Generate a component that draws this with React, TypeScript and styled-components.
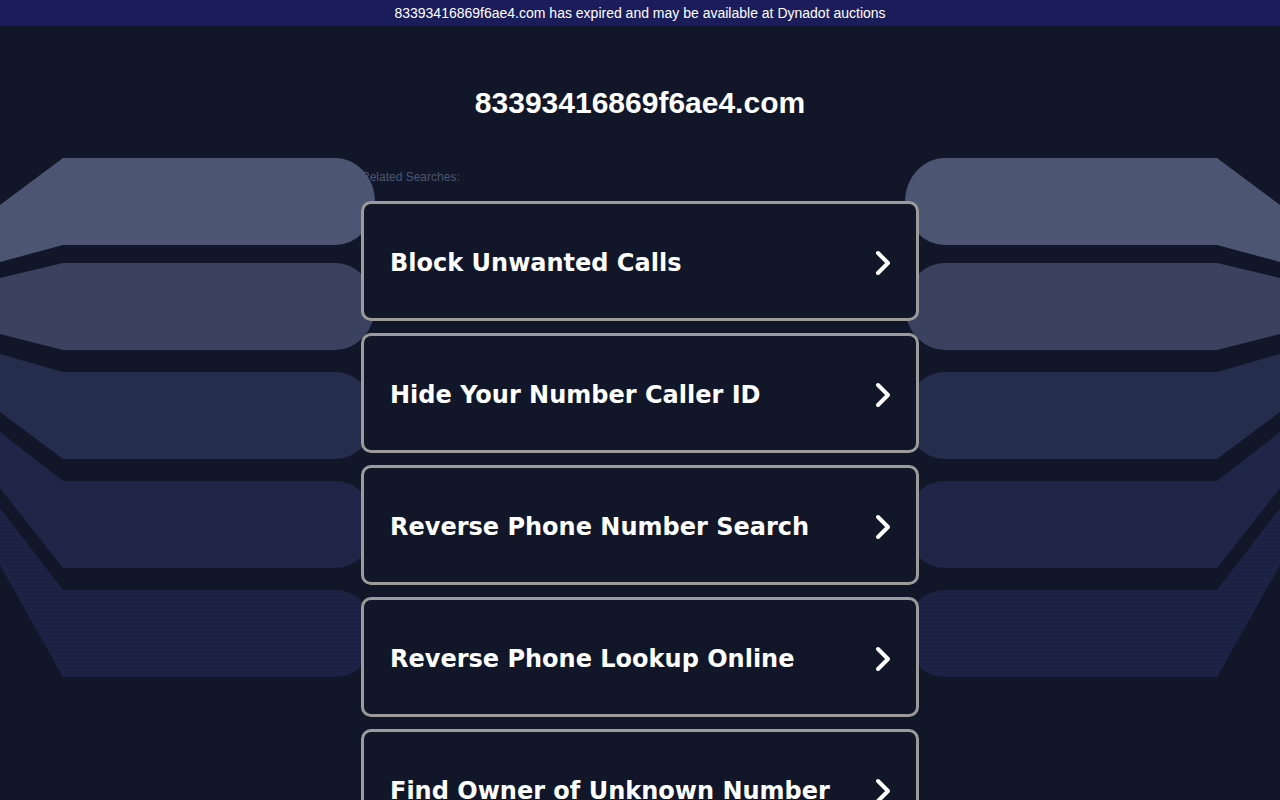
import styled, { createGlobalStyle } from "styled-components";

const GlobalStyle = createGlobalStyle`
  html, body {
    margin: 0;
    padding: 0;
    background: #111729;
    scrollbar-width: none;
  }
  body::-webkit-scrollbar {
    display: none;
  }
`;

const Page = styled.div`
  position: relative;
  min-height: 100vh;
  overflow: hidden;
  background: #111729;
  font-family: "Liberation Sans", Arial, sans-serif;
`;

const TopBar = styled.div`
  position: relative;
  z-index: 2;
  height: 26px;
  background: #1b1d5b;
  color: #ffffff;
  font-size: 14px;
  line-height: 26px;
  text-align: center;
`;

const Backdrop = styled.svg`
  position: absolute;
  top: 0;
  left: 0;
  width: 1280px;
  height: 720px;
  z-index: 0;
  pointer-events: none;
`;

const Content = styled.main`
  position: relative;
  z-index: 1;
  width: 558px;
  margin: 0 auto;
  padding-bottom: 40px;
`;

const Title = styled.h1`
  margin: 59px 0 0;
  font-size: 30px;
  line-height: 36px;
  font-weight: 700;
  color: #ffffff;
  text-align: center;
  font-family: "Liberation Sans", Arial, sans-serif;
`;

const Label = styled.div`
  margin-top: 49px;
  font-size: 12px;
  line-height: 14px;
  color: #4c5672;
`;

const List = styled.div`
  margin-top: 17px;
  display: flex;
  flex-direction: column;
  gap: 12px;
`;

const Card = styled.a`
  box-sizing: border-box;
  height: 120px;
  display: flex;
  align-items: center;
  justify-content: space-between;
  padding: 3px 25px 0 26px;
  border: 3px solid #9b9b9b;
  border-radius: 10px;
  background: #111729;
  color: #ffffff;
  text-decoration: none;
  cursor: pointer;
`;

const CardText = styled.span`
  font-family: "DejaVu Sans", Verdana, sans-serif;
  font-weight: 700;
  font-size: 24px;
  line-height: 30px;
  white-space: nowrap;
`;

const Chevron = () => (
  <svg width="16" height="26" viewBox="0 0 16 26" fill="none">
    <polyline
      points="3,3 13,13 3,23"
      stroke="#ffffff"
      strokeWidth="4"
      strokeLinecap="round"
      strokeLinejoin="round"
    />
  </svg>
);

// band geometry: corner top/bottom at x=63, edge top/bottom at x=0
const bands = [
  { T: 158, B: 245, t0: 205, b0: 262, fill: "#4c5672" },
  { T: 263, B: 350, t0: 278, b0: 334, fill: "#3a4260" },
  { T: 372, B: 459, t0: 354, b0: 412, fill: "#252d4c" },
  { T: 481, B: 568, t0: 432, b0: 488, fill: "url(#dots4)" },
  { T: 590, B: 677, t0: 508, b0: 565, fill: "url(#dots5)" },
];

const bandPath = (b: (typeof bands)[number]) => {
  const ry = (b.B - b.T) / 2;
  return `M -20 ${b.t0 - (b.T - b.t0) * (20 / 63)} L 63 ${b.T} L 335 ${b.T} A 40 ${ry} 0 0 1 335 ${b.B} L 63 ${b.B} L -20 ${b.b0 - (b.B - b.b0) * (20 / 63)} Z`;
};

const Bands = () => (
  <g>
    {bands.map((b, i) => (
      <path key={i} d={bandPath(b)} fill={b.fill} />
    ))}
  </g>
);

const items = [
  "Block Unwanted Calls",
  "Hide Your Number Caller ID",
  "Reverse Phone Number Search",
  "Reverse Phone Lookup Online",
  "Find Owner of Unknown Number",
];

export default function App() {
  return (
    <Page>
      <GlobalStyle />
      <Backdrop viewBox="0 0 1280 720">
        <defs>
          <pattern id="dots4" width="4" height="4" patternUnits="userSpaceOnUse">
            <rect width="4" height="4" fill="#1e2546" />
            <circle cx="2" cy="2" r="0.5" fill="#242c50" />
          </pattern>
          <pattern id="dots5" width="4" height="4" patternUnits="userSpaceOnUse">
            <rect width="4" height="4" fill="#1b2243" />
            <circle cx="2" cy="2" r="0.5" fill="#21294d" />
          </pattern>
        </defs>
        <Bands />
        <g transform="translate(1280 0) scale(-1 1)">
          <Bands />
        </g>
      </Backdrop>
      <TopBar>83393416869f6ae4.com has expired and may be available at Dynadot auctions</TopBar>
      <Content>
        <Title>83393416869f6ae4.com</Title>
        <Label>Related Searches:</Label>
        <List>
          {items.map((text) => (
            <Card key={text}>
              <CardText>{text}</CardText>
              <Chevron />
            </Card>
          ))}
        </List>
      </Content>
    </Page>
  );
}
